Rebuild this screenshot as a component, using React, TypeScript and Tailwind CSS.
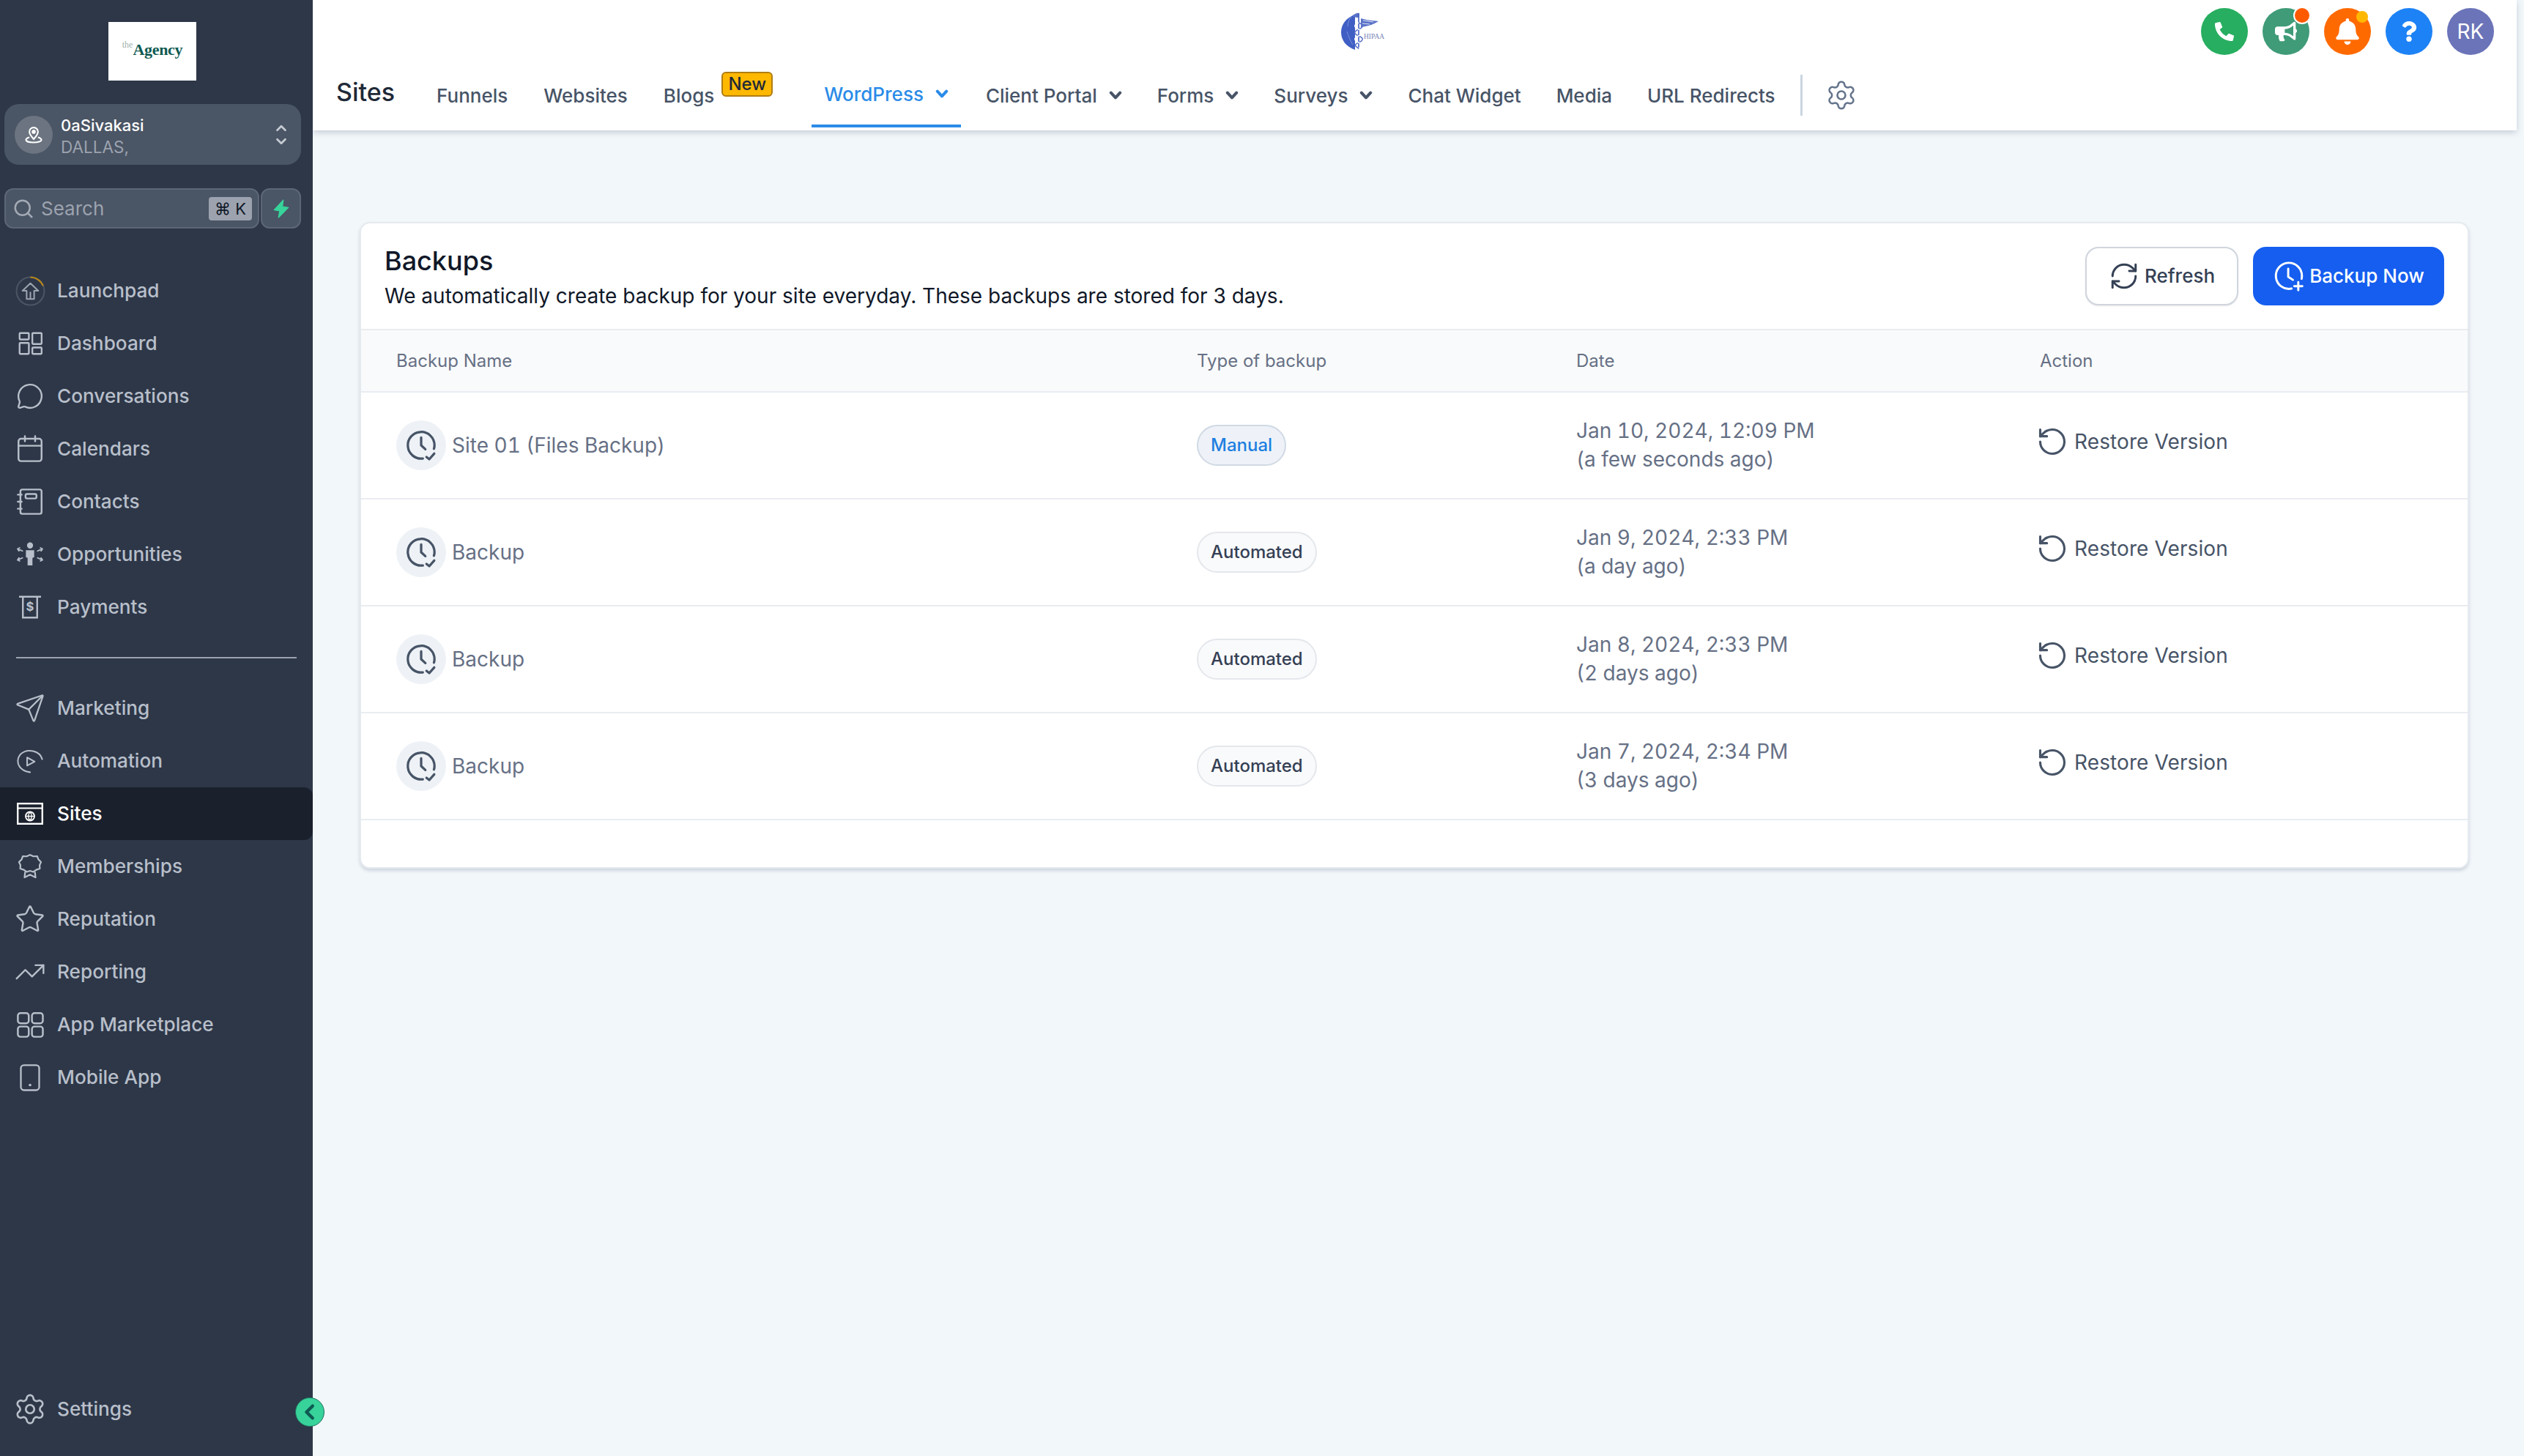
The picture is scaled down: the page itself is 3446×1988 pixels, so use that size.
import React from "react";
import { Search, ChevronUp, ChevronDown, MessageCircle, Send, Star, TrendingUp, Settings, RotateCcw, RefreshCw } from "lucide-react";
import { FaPhoneAlt, FaBullhorn, FaBell, FaQuestion } from "react-icons/fa";

type IconProps = { className?: string };
const S = ({ className, children, sw = 1.6 }: IconProps & { children: React.ReactNode; sw?: number }) => (
  <svg viewBox="0 0 24 24" fill="none" stroke="currentColor" strokeWidth={sw} strokeLinecap="round" strokeLinejoin="round" className={className}>
    {children}
  </svg>
);

const Launchpad = ({ className }: IconProps) => (
  <svg viewBox="0 0 40 40" fill="none" className={className}>
    <circle cx="20" cy="20" r="18.500" stroke="#4b5563" strokeWidth="2" />
    <path d="M20 1.500A18.500 18.500 0 0 1 37 13" stroke="#b7851c" strokeWidth="2" />
    <path d="M20 9.500 L30.500 19.500 L25 19.500 L25 30.500 L15 30.500 L15 19.500 L9.500 19.500 Z M20 21V30.500" stroke="#9ca3af" strokeWidth="2" strokeLinejoin="round" />
  </svg>
);
const Dashboard = ({ className }: IconProps) => (
  <S className={className} sw={1.5}>
    <rect x="3" y="3" width="8" height="5.500" rx=".6" />
    <rect x="14" y="3" width="8" height="9.500" rx=".6" />
    <rect x="3" y="11.500" width="8" height="9.500" rx=".6" />
    <rect x="14" y="15.500" width="8" height="5.500" rx=".6" />
  </S>
);
const Cal = ({ className }: IconProps) => (
  <S className={className} sw={1.4}>
    <rect x="3" y="4" width="18" height="17.500" rx="2" />
    <path d="M3 9.500h18M8 2v4M16 2v4" />
  </S>
);
const Contacts = ({ className }: IconProps) => (
  <S className={className} sw={1.4}>
    <rect x="4.500" y="2.500" width="16.500" height="19" rx="1.500" />
    <rect x="8.500" y="6" width="8.500" height="3.500" rx="1.200" />
    <path d="M2.500 6.500h3M2.500 12h3M2.500 17.500h3" />
  </S>
);
const Opps = ({ className }: IconProps) => (
  <svg viewBox="0 0 40 36" fill="currentColor" className={className}>
    <circle cx="20" cy="5" r="4.400" />
    <path d="M14 12h12v10l-2.500 1v11h-7V23L14 22z" />
    <g fill="none" stroke="currentColor" strokeWidth="1.900" strokeLinecap="round" strokeLinejoin="round">
      <path d="M9 13 2 10M2 10l3-1.500M2 10l2 3" />
      <path d="M31 13l7-3M38 10l-3-1.500M38 10l-2 3" />
      <path d="M9 23l-7 3M2 26l3 1.500M2 26l2-3" />
      <path d="M31 23l7 3M38 26l-3 1.500M38 26l-2-3" />
    </g>
  </svg>
);
const Payments = ({ className }: IconProps) => (
  <svg viewBox="0 0 24 24" fill="none" stroke="currentColor" strokeWidth="1.600" className={className}>
    <path d="M2 2.500h20M5.500 2.500v19h13v-19" />
    <text x="12" y="15.500" fontSize="11" fontWeight="700" textAnchor="middle" fill="currentColor" stroke="none" fontFamily="Inter, sans-serif">$</text>
  </svg>
);
const Automation = ({ className }: IconProps) => (
  <S className={className} sw={1.300}>
    <path d="M22.500 10.500A11 9.500 0 0 0 3.500 6.500C1 9.500.8 14 3 17c1.800 2.500 4.800 4.200 9 4.700" />
    <path d="M9.500 9l6.500 3.500-6.500 3.500z" />
  </S>
);
const SitesIcon = ({ className }: IconProps) => (
  <svg viewBox="0 0 36 30" fill="none" stroke="currentColor" className={className}>
    <rect x="1.200" y="1.200" width="33.600" height="27.600" strokeWidth="2.400" />
    <path d="M1 7.500h34" strokeWidth="2" />
    <circle cx="18" cy="18.500" r="6" strokeWidth="1.800" />
    <path d="M12 18.500h12M18 12.500c-3 3.500-3 8.500 0 12M18 12.500c3 3.500 3 8.500 0 12" strokeWidth="1.400" />
  </svg>
);
const Membership = ({ className }: IconProps) => (
  <S className={className} sw={1.500}>
    <path d="M12 2l3 1.500 3.500-.2 1.200 3.200 2.300 2.500-1.300 3 .2 3.300-3.200 1.100-2.700 2-3-1-3 1-2.700-2-3.200-1.100.2-3.300L2 9l2.300-2.500 1.200-3.200L9 3.500z" transform="translate(0 -.5) scale(1 .95)" />
    <path d="M7.500 17.500L7 22l5-2.500L17 22l-.5-4.500" />
  </S>
);
const Market = ({ className }: IconProps) => (
  <S className={className} sw={1.400}>
    <rect x="2.500" y="3" width="8.500" height="8" rx="2" />
    <rect x="13.500" y="3" width="8.500" height="8" rx="2" />
    <rect x="2.500" y="13.500" width="8.500" height="8" rx="2" />
    <rect x="13.500" y="13.500" width="8.500" height="8" rx="2" />
  </S>
);
const Mobile = ({ className }: IconProps) => (
  <S className={className} sw={1.400}>
    <rect x="4.500" y="2" width="15" height="20.500" rx="2.500" />
    <path d="M12 18.300h.01" strokeWidth="2.200" />
  </S>
);
const ClockCheck = ({ className }: IconProps) => (
  <S className={className} sw={1.700}>
    <path d="M13.200 21.400A9.500 9.500 0 1 1 21.500 12c0 1-.1 1.700-.4 2.500" />
    <path d="M12 6.500V12l3 2.800" />
    <path d="M15.800 20.300l2 1.600 3.500-4" />
  </S>
);
const ClockPlus = ({ className }: IconProps) => (
  <S className={className} sw={1.600}>
    <path d="M14 21.300A9.700 9.700 0 1 1 21.700 12c0 .7-.1 1.300-.2 2" />
    <path d="M11.500 6.500v6l3.500 2.300" />
    <path d="M19 16.500v6M16 19.500h6" />
  </S>
);
const Bolt = ({ className }: IconProps) => (
  <svg viewBox="0 0 24 24" fill="#37d39a" className={className}>
    <path d="M14.500 1 3 13.500l7 1.200L8.500 23 21 10.500l-7.500-1.200z" stroke="#37d39a" strokeWidth="1.200" strokeLinejoin="round" />
  </svg>
);
const Hipaa = ({ className }: IconProps) => (
  <svg viewBox="0 0 62 52" className={className}>
    <path d="M19 3C7 7 0 16 0 27c0 11 7 20 19 24z" fill="#3f5fc4" />
    <path d="M14 6c-3 3-5 8-5 13M8 26c2 6 4 12 8 18" stroke="#7c90d8" strokeWidth="1" fill="none" />
    <path d="M27 8c6 2 13 3 24 4-7 4-12 6-18 7-2 .3-4 .6-6 1.500z" fill="#5a72c9" />
    <path d="M30 11l14 2M29 15l10 1" stroke="#fff" strokeWidth=".8" />
    <path d="M15 5c3-3 7-5 10-4l-1 6c-2 0-5 0-9-2z" fill="#5a72c9" />
    <path d="M24 2v48" stroke="#3f5fc4" strokeWidth="1.600" />
    <path d="M24 14c7 3 7 6 0 9s-7 6 0 9 7 6 0 9-5 5 0 8" stroke="#5a72c9" strokeWidth="1.500" fill="none" />
    <path d="M24 14c-7 3-7 6 0 9s7 6 0 9-7 6 0 9 5 5 0 8" stroke="#fff" strokeWidth="1.500" fill="none" />
    <text x="31" y="36" fontSize="9.500" fill="#7a86b8" fontFamily="Liberation Serif, serif">HIPAA</text>
  </svg>
);
const Chev = ({ className }: IconProps) => (
  <svg viewBox="0 0 16 12" fill="none" stroke="currentColor" strokeWidth="3.600" strokeLinecap="round" strokeLinejoin="round" className={className}>
    <path d="M2.500 3 8 9l5.500-6" />
  </svg>
);

const navTop = [
  { label: "Launchpad", Icon: Launchpad, cls: "w-[41px] h-[41px]" },
  { label: "Dashboard", Icon: Dashboard, cls: "w-[38px] h-[38px]" },
  { label: "Conversations", Icon: MessageCircle, cls: "w-[38px] h-[38px] stroke-[1.5]" },
  { label: "Calendars", Icon: Cal, cls: "w-[42px] h-[42px]" },
  { label: "Contacts", Icon: Contacts, cls: "w-[42px] h-[42px]" },
  { label: "Opportunities", Icon: Opps, cls: "w-[38px] h-[34px]" },
  { label: "Payments", Icon: Payments, cls: "w-[36px] h-[36px]" },
];
const navBottom = [
  { label: "Marketing", Icon: Send, cls: "w-[42px] h-[42px] stroke-[1.3]" },
  { label: "Automation", Icon: Automation, cls: "w-[38px] h-[38px]" },
  { label: "Sites", Icon: SitesIcon, cls: "w-[36px] h-[30px]", active: true },
  { label: "Memberships", Icon: Membership, cls: "w-[36px] h-[38px]" },
  { label: "Reputation", Icon: Star, cls: "w-[42px] h-[42px] stroke-[1.4]" },
  { label: "Reporting", Icon: TrendingUp, cls: "w-[44px] h-[44px] stroke-[1.3]" },
  { label: "App Marketplace", Icon: Market, cls: "w-[42px] h-[42px]" },
  { label: "Mobile App", Icon: Mobile, cls: "w-[40px] h-[40px]" },
];

function NavRow({ label, Icon, cls, active }: { label: string; Icon: React.ComponentType<any>; cls: string; active?: boolean }) {
  return (
    <div className={`flex h-[72px] items-center rounded-r-[12px] text-[26.200px] font-medium ${active ? "bg-[#1a202c] text-white" : "text-[#b8bfca]"}`}>
      <span className="flex w-[78px] justify-center pl-[4px]">
        <Icon className={cls} />
      </span>
      <span>{label}</span>
    </div>
  );
}

const tabs = [
  { label: "Funnels" },
  { label: "Websites" },
  { label: "Blogs", badge: true },
];
const tabs2 = [
  { label: "Client Portal", chev: true },
  { label: "Forms", chev: true },
  { label: "Surveys", chev: true },
  { label: "Chat Widget" },
  { label: "Media" },
  { label: "URL Redirects" },
];

const rows = [
  { name: "Site 01 (Files Backup)", type: "Manual", date: "Jan 10, 2024, 12:09 PM", ago: "(a few seconds ago)" },
  { name: "Backup", type: "Automated", date: "Jan 9, 2024, 2:33 PM", ago: "(a day ago)" },
  { name: "Backup", type: "Automated", date: "Jan 8, 2024, 2:33 PM", ago: "(2 days ago)" },
  { name: "Backup", type: "Automated", date: "Jan 7, 2024, 2:34 PM", ago: "(3 days ago)" },
];

const TopBtn = ({ cls, children }: { cls: string; children: React.ReactNode }) => (
  <div className={`relative flex h-[64px] w-[64px] items-center justify-center rounded-full text-white ${cls}`}>{children}</div>
);

export default function App() {
  return (
    <div className="flex h-[1988px] w-[3446px] overflow-hidden bg-[#f2f7fa] font-['Inter',sans-serif]">
      <aside className="relative flex w-[427px] shrink-0 flex-col bg-[#2d3748]">
        <div className="ml-[148px] mt-[30px] flex h-[80px] w-[120px] items-center justify-center bg-white pb-[4px]">
          <span className="-mt-[10px] mb-[4px] font-['Liberation_Serif',serif] text-[12px] leading-none text-[#9fb3ae]">the</span>
          <span className="font-['Liberation_Serif',serif] text-[22px] font-bold leading-none tracking-[-0.3px] text-[#0f5b52]">Agency</span>
        </div>

        <div className="ml-[6px] mr-[16px] mt-[32px] flex h-[83px] items-center rounded-[20px] bg-[#4a5565] pl-[14px] pr-[16px]">
          <div className="flex h-[52px] w-[52px] shrink-0 items-center justify-center rounded-full bg-[#6b7480] text-white">
            <svg viewBox="0 0 24 24" fill="none" stroke="currentColor" strokeWidth="1.800" className="h-[28px] w-[28px]">
              <path d="M12 17c-3-3.500-5-5.500-5-8.500a5 5 0 0 1 10 0c0 3-2 5-5 8.500z" />
              <circle cx="12" cy="8.500" r="1.500" fill="currentColor" />
              <path d="M7 15c-2.500.7-4 1.700-4 3 0 1.800 4 3 9 3s9-1.200 9-3c0-1.300-1.500-2.300-4-3" />
            </svg>
          </div>
          <div className="ml-[11px] flex flex-col pt-[5px]">
            <span className="text-[22px] font-medium leading-[30px] text-white">0aSivakasi</span>
            <span className="text-[22.500px] leading-[30px] text-[#9ca3af]">DALLAS,</span>
          </div>
          <div className="ml-auto flex flex-col items-center text-[#c5cad3]">
            <ChevronUp className="-mb-[4px] h-[22px] w-[22px]" strokeWidth={3} />
            <ChevronDown className="h-[22px] w-[22px]" strokeWidth={3} />
          </div>
        </div>

        <div className="ml-[6px] mr-[16px] mt-[32px] flex h-[55px] gap-[2px]">
          <div className="flex flex-1 items-center rounded-[12px] border-2 border-[#5d6675] bg-[#4a5565] pl-[9px] pr-[8px]">
            <Search className="h-[30px] w-[30px] text-[#a3aab5]" strokeWidth={2} />
            <span className="ml-[9px] text-[26px] text-[#9ca3af]">Search</span>
            <span className="ml-auto flex h-[32px] w-[59px] items-center justify-center rounded-[4px] bg-[#9ca3af] text-[22px] leading-none text-[#111827]">⌘ K</span>
          </div>
          <div className="flex w-[55px] items-center justify-center rounded-[12px] border-2 border-[#5d6675] bg-[#4a5565]">
            <Bolt className="h-[26px] w-[26px]" />
          </div>
        </div>

        <nav className="mt-[49px] flex flex-col">
          {navTop.map((n) => (
            <NavRow key={n.label} {...n} />
          ))}
        </nav>
        <div className="mx-[22px] mt-[32px] h-[2px] bg-[#9ca3af]" />
        <nav className="mt-[32px] flex flex-col">
          {navBottom.map((n) => (
            <NavRow key={n.label} {...n} />
          ))}
        </nav>

        <div className="mb-[28px] mt-auto">
          <NavRow label="Settings" Icon={Settings} cls="w-[46px] h-[46px] stroke-[1.4]" />
        </div>
        <div className="absolute left-[403px] top-[1908px] z-10 flex h-[40px] w-[40px] items-center justify-center rounded-full border border-[#1f6f5c] bg-[#37d39a] text-[#0f5b52]">
          <svg viewBox="0 0 16 16" fill="none" stroke="currentColor" strokeWidth="3" strokeLinecap="round" strokeLinejoin="round" className="h-[24px] w-[24px]">
            <path d="M10.500 2.500 5 8l5.500 5.500" />
          </svg>
        </div>
      </aside>

      <div className="flex min-w-0 flex-1 flex-col">
        <header className="mr-[10px] flex h-[178px] shrink-0 flex-col bg-white shadow-[0_3px_8px_rgba(100,116,139,0.3)]">
          <div className="flex h-[86px] items-start pl-[1404px] pr-[31px] pt-[11px]">
            <Hipaa className="mt-[6px] h-[52px] w-[62px]" />
            <div className="ml-auto flex gap-[20px]">
              <TopBtn cls="bg-[#27ae60]"><FaPhoneAlt className="h-[26px] w-[26px]" /></TopBtn>
              <TopBtn cls="bg-[#3f9b78]">
                <FaBullhorn className="h-[30px] w-[30px]" />
                <span className="absolute -right-[2px] -top-[2px] h-[24px] w-[24px] rounded-full border-2 border-white bg-[#ff5a00]" />
              </TopBtn>
              <TopBtn cls="bg-[#ff6a00]">
                <FaBell className="h-[36px] w-[36px]" />
                <span className="absolute right-[4px] top-[4px] h-[16px] w-[16px] rounded-full bg-[#ffb800]" />
              </TopBtn>
              <TopBtn cls="bg-[#1d82f5]"><FaQuestion className="h-[28px] w-[28px]" /></TopBtn>
              <TopBtn cls="bg-[#6b74b8]"><span className="text-[28px]">RK</span></TopBtn>
            </div>
          </div>
          <div className="flex h-[88px] items-center pl-[32px] text-[26px] font-medium text-[#475467]">
            <span className="-mt-[8px] mr-[57px] text-[34px] leading-none text-[#1f2937]">Sites</span>
            <div className="flex items-center gap-[49px]">
              {tabs.map((t) => (
                <span key={t.label} className="relative flex items-center">
                  {t.label}
                  {t.badge && (
                    <span className="-mt-[30px] ml-[10px] flex h-[34px] w-[70px] items-center justify-center rounded-[6px] border-2 border-[#b07d14] bg-[#ffb800] text-[24px] leading-none text-[#1f2937]">New</span>
                  )}
                </span>
              ))}
            </div>
            <div className="ml-[53px] flex h-full items-center gap-[16px] border-b-4 border-[#2b8be8] px-[17px] text-[#2b8be8]">
              WordPress
              <Chev className="h-[14px] w-[18px]" />
            </div>
            <div className="ml-[34px] flex items-center gap-[48px]">
              {tabs2.map((t) => (
                <span key={t.label} className="flex items-center gap-[16px]">
                  {t.label}
                  {t.chev && <Chev className="h-[14px] w-[18px]" />}
                </span>
              ))}
            </div>
            <span className="ml-[34px] h-[56px] w-[3px] bg-[#cbd5e1]" />
            <Settings className="ml-[31px] h-[44px] w-[44px] stroke-[1.4] text-[#64748b]" />
          </div>
        </header>

        <main className="flex-1 pl-[64px] pr-[75px] pt-[125px]">
          <section className="flex h-[883px] flex-col rounded-[14px] border-2 border-[#e5eaef] bg-white shadow-[0_3px_4px_rgba(100,116,139,0.25)]">
            <div className="flex h-[144px] shrink-0 items-center justify-between px-[32px]">
              <div className="mt-[5px]">
                <h2 className="text-[36px] font-medium leading-[46px] text-[#101828]">Backups</h2>
                <p className="mt-[3px] text-[28px] leading-[44px] text-[#101828]">We automatically create backup for your site everyday. These backups are stored for 3 days.</p>
              </div>
              <div className="-mt-[1px] flex gap-[20px] text-[26px] font-medium">
                <button className="flex h-[80px] w-[209px] items-center justify-center gap-[7px] rounded-[18px] border-2 border-[#d0d5dd] bg-white text-[#344054] shadow-[0_1px_2px_rgba(16,24,40,0.1)]">
                  <RefreshCw className="h-[42px] w-[42px]" strokeWidth={1.700} />
                  Refresh
                </button>
                <button className="flex h-[80px] w-[261px] items-center justify-center gap-[6px] rounded-[18px] bg-[#155eef] text-white">
                  <ClockPlus className="h-[44px] w-[44px]" />
                  Backup Now
                </button>
              </div>
            </div>
            <div className="grid h-[87px] shrink-0 grid-cols-[1093px_518px_633px_1fr] items-center border-y-2 border-[#e9edf1] bg-[#f9fafb] pl-[48px] text-[24px] text-[#667085]">
              <span>Backup Name</span>
              <span>Type of backup</span>
              <span>Date</span>
              <span>Action</span>
            </div>
            {rows.map((r) => (
              <div key={r.date} className="grid h-[146px] shrink-0 grid-cols-[1093px_518px_633px_1fr] items-center border-b-2 border-[#e9edf1] pl-[48px]">
                <div className="flex items-center gap-[8px]">
                  <span className="flex h-[68px] w-[68px] items-center justify-center rounded-full bg-[#eef2f6] text-[#475467]">
                    <ClockCheck className="h-[46px] w-[46px]" />
                  </span>
                  <span className="text-[28px] tabular-nums text-[#667085]">{r.name}</span>
                </div>
                <div>
                  <span className={`inline-flex h-[56px] items-center rounded-full border-2 px-[17px] text-[24px] font-medium ${r.type === "Manual" ? "border-[#d0d9e4] bg-[#eef2f8] text-[#1d7fe0]" : "border-[#e4e7ec] bg-[#f9fafb] text-[#344054]"}`}>{r.type}</span>
                </div>
                <div className="text-[28px] leading-[39px] tabular-nums text-[#667085]">
                  <div>{r.date}</div>
                  <div>{r.ago}</div>
                </div>
                <div className="-ml-[5px] flex items-center gap-[8px] pb-[10px] text-[28px] tracking-[0.1px] text-[#475467]">
                  <RotateCcw className="h-[44px] w-[44px]" strokeWidth={1.700} />
                  Restore Version
                </div>
              </div>
            ))}
          </section>
        </main>
      </div>
    </div>
  );
}
